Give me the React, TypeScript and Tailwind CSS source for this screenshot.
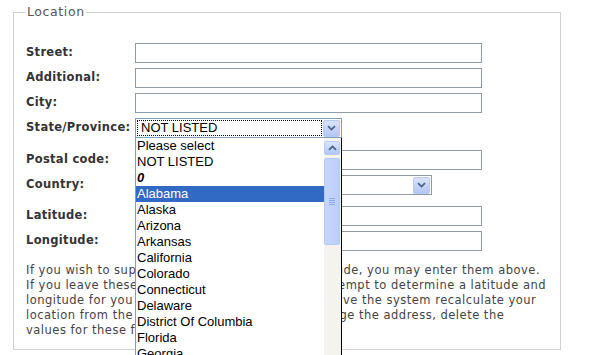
import React from 'react';

const verdana = 'font-["DejaVu_Sans",Verdana,sans-serif]';
const arial = 'font-["Liberation_Sans",Arial,sans-serif]';

function Chevron({ up = false }: { up?: boolean }) {
  return (
    <svg width="9" height="6" viewBox="0 0 9 6" className={up ? 'rotate-180' : ''}>
      <path d="M1 1.2 L4.5 4.6 L8 1.2" fill="none" stroke="#4d6185" strokeWidth="1.8" />
    </svg>
  );
}

function XpButton({ up = false, className = '' }: { up?: boolean; className?: string }) {
  return (
    <div
      className={`flex items-center justify-center rounded-[2px] border border-[#b9c9ef] bg-gradient-to-b from-[#d9e4fd] to-[#b3c7f5] ${className}`}
    >
      <Chevron up={up} />
    </div>
  );
}

function TextField() {
  return <div className="h-[20px] w-[347px] border border-[#8e9ba6] bg-white" />;
}

function Row({ label, children, className = '' }: { label: string; children: React.ReactNode; className?: string }) {
  return (
    <div className={`flex items-center ${className}`}>
      <label
        className={`w-[109px] shrink-0 ${verdana} text-[11.5px] font-bold leading-[16px] tracking-[0.3px] text-[#333] -mt-[2px]`}
      >
        {label}
      </label>
      {children}
    </div>
  );
}

const options = [
  'Please select',
  'NOT LISTED',
  '0',
  'Alabama',
  'Alaska',
  'Arizona',
  'Arkansas',
  'California',
  'Colorado',
  'Connecticut',
  'Delaware',
  'District Of Columbia',
  'Florida',
  'Georgia',
];

function StateList() {
  return (
    <div className="absolute left-0 top-[20px] z-10 flex h-[217px] w-[207px] overflow-hidden border-l border-r border-[#7f9db9] border-r-black bg-white">
      <ul className={`flex-1 ${arial} text-[13px] leading-[16px] text-black`}>
        {options.map((o) => (
          <li
            key={o}
            className={`h-[16px] whitespace-nowrap pl-[1px] ${o === 'Alabama' ? 'bg-[#316ac5] text-white' : ''} ${
              o === '0' ? 'font-bold italic' : ''
            }`}
          >
            {o}
          </li>
        ))}
      </ul>
      <div className="flex w-[17px] shrink-0 flex-col bg-[#f4f3ee] pt-[3px]">
        <XpButton up className="h-[14px] w-[16px]" />
        <div className="mt-[3px] flex h-[87px] w-[16px] flex-col items-center justify-center gap-[1px] rounded-[2px] border border-[#b4c8f6] bg-gradient-to-r from-[#c6d5fb] to-[#bccffa]">
          <div className="h-px w-[6px] bg-[#8fa8e8]" />
          <div className="h-px w-[6px] bg-[#8fa8e8]" />
          <div className="h-px w-[6px] bg-[#8fa8e8]" />
          <div className="h-px w-[6px] bg-[#8fa8e8]" />
        </div>
      </div>
    </div>
  );
}

export default function App() {
  return (
    <div className="h-[355px] w-[593px] overflow-hidden bg-white">
      <fieldset className="ml-[13px] mt-[4px] w-[548px] border border-[#d0d0d0] px-[12px] pb-[11px]">
        <legend className={`px-[1px] ${verdana} text-[12.5px] leading-[16px] tracking-[0.6px] text-[#555]`}>
          Location
        </legend>

        <div className="mt-[23px] flex flex-col">
          <Row label="Street:">
            <TextField />
          </Row>
          <Row label="Additional:" className="mt-[5px]">
            <TextField />
          </Row>
          <Row label="City:" className="mt-[5px]">
            <TextField />
          </Row>
          <Row label="State/Province:" className="mt-[5px]">
            <div className="relative">
              <div className="flex h-[20px] w-[207px] items-center border border-[#7f9db9] bg-white p-px">
                <div
                  className={`flex h-full flex-1 items-center border border-dotted border-black pl-[3px] ${arial} text-[13px] text-black`}
                >
                  NOT LISTED
                </div>
                <XpButton className="ml-px h-[17px] w-[17px]" />
              </div>
              <StateList />
            </div>
          </Row>
          <Row label="Postal code:" className="mt-[12px]">
            <TextField />
          </Row>
          <Row label="Country:" className="mt-[5px]">
            <div className="flex h-[20px] w-[297px] items-center justify-end border border-[#8e9ba6] bg-white p-px">
              <XpButton className="h-[17px] w-[17px]" />
            </div>
          </Row>
          <Row label="Latitude:" className="mt-[11px]">
            <TextField />
          </Row>
          <Row label="Longitude:" className="mt-[5px]">
            <TextField />
          </Row>
        </div>

        <p
          className={`mt-[12px] whitespace-nowrap ${verdana} text-[11.5px] leading-[15px] tracking-[0.5px] text-[#444]`}
        >
          If you wish to supply your own latitude and longitude, you may enter them above.
          <br />
          If you leave these fields blank, the system will attempt to determine a latitude and
          <br />
          longitude for you from its address. You can also have the system recalculate your
          <br />
          location from the address given above if you change the address, delete the
          <br />
          values for these fields and save the form.
        </p>
      </fieldset>
    </div>
  );
}
